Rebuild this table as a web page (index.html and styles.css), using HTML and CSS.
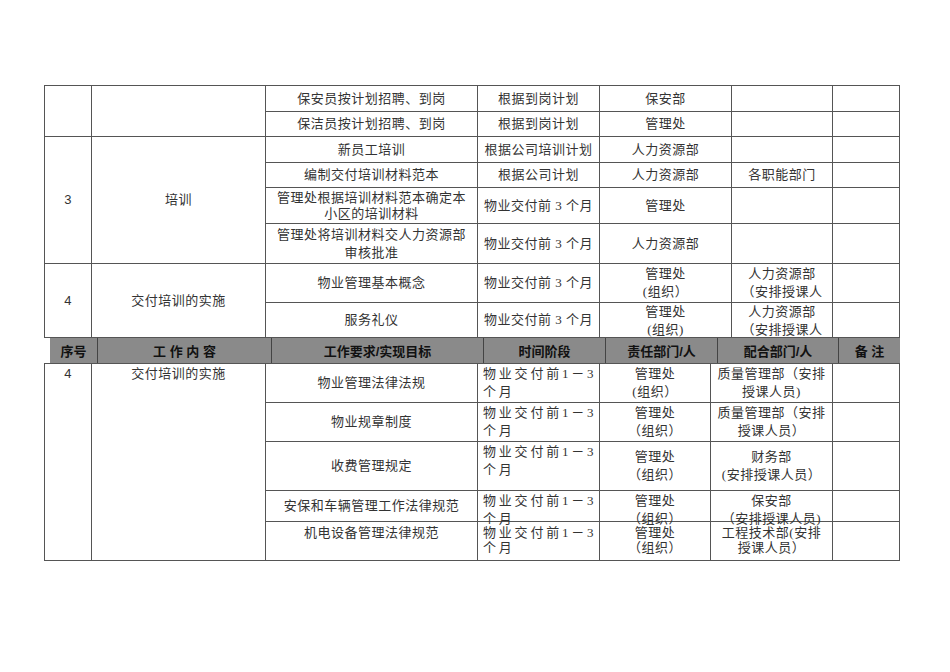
FILE: index.html
```html
<!DOCTYPE html>
<html lang="zh">
<head>
<meta charset="utf-8">
<title>交付培训计划</title>
<link rel="stylesheet" href="styles.css">
</head>
<body>
<div class="page">
  <table class="grid top">
    <colgroup>
      <col class="c1"><col class="c2"><col class="c3"><col class="c4"><col class="c5a"><col class="c6a"><col class="c7">
    </colgroup>
    <tr class="h26">
      <td rowspan="2"></td>
      <td rowspan="2"></td>
      <td>保安员按计划招聘、到岗</td>
      <td>根据到岗计划</td>
      <td>保安部</td>
      <td></td>
      <td></td>
    </tr>
    <tr class="h25">
      <td>保洁员按计划招聘、到岗</td>
      <td>根据到岗计划</td>
      <td>管理处</td>
      <td></td>
      <td></td>
    </tr>
    <tr class="h26">
      <td rowspan="4" class="num">3</td>
      <td rowspan="4">培训</td>
      <td>新员工培训</td>
      <td>根据公司培训计划</td>
      <td>人力资源部</td>
      <td></td>
      <td></td>
    </tr>
    <tr class="h25">
      <td>编制交付培训材料范本</td>
      <td>根据公司计划</td>
      <td>人力资源部</td>
      <td>各职能部门</td>
      <td></td>
    </tr>
    <tr class="h36">
      <td class="tight">管理处根据培训材料范本确定本<br>小区的培训材料</td>
      <td>物业交付前 3 个月</td>
      <td>管理处</td>
      <td></td>
      <td></td>
    </tr>
    <tr class="h40">
      <td>管理处将培训材料交人力资源部<br>审核批准</td>
      <td>物业交付前 3 个月</td>
      <td>人力资源部</td>
      <td></td>
      <td></td>
    </tr>
    <tr class="h39">
      <td rowspan="2" class="num">4</td>
      <td rowspan="2">交付培训的实施</td>
      <td>物业管理基本概念</td>
      <td>物业交付前 3 个月</td>
      <td>管理处<br>(组织）</td>
      <td>人力资源部<br>（安排授课人</td>
      <td></td>
    </tr>
    <tr class="h35">
      <td>服务礼仪</td>
      <td>物业交付前 3 个月</td>
      <td class="spill"><div class="fix34">管理处<br>(组织)</div></td>
      <td class="spill"><div class="fix34">人力资源部<br>（安排授课人</div></td>
      <td></td>
    </tr>
  </table>

  <div class="head">
    <div class="hc">序号</div>
    <div class="hc">工 作 内 容</div>
    <div class="hc">工作要求/实现目标</div>
    <div class="hc">时间阶段</div>
    <div class="hc">责任部门/人</div>
    <div class="hc">配合部门/人</div>
    <div class="hc">备 注</div>
  </div>

  <table class="grid bottom">
    <colgroup>
      <col class="c1"><col class="c2"><col class="c3"><col class="c4"><col class="c5b"><col class="c6b"><col class="c7">
    </colgroup>
    <tr class="h39">
      <td rowspan="5" class="num vtop">4</td>
      <td rowspan="5" class="vtop">交付培训的实施</td>
      <td>物业管理法律法规</td>
      <td class="time">物业交付前1－3<br>个月</td>
      <td>管理处<br>(组织）</td>
      <td>质量管理部（安排<br>授课人员)</td>
      <td></td>
    </tr>
    <tr class="h39">
      <td>物业规章制度</td>
      <td class="time">物业交付前1－3<br>个月</td>
      <td>管理处<br>（组织）</td>
      <td>质量管理部（安排<br>授课人员）</td>
      <td></td>
    </tr>
    <tr class="h49">
      <td>收费管理规定</td>
      <td class="time">物业交付前1－3<br>个月</td>
      <td>管理处<br>（组织）</td>
      <td>财务部<br>(安排授课人员）</td>
      <td></td>
    </tr>
    <tr class="h31">
      <td>安保和车辆管理工作法律规范</td>
      <td class="time vtop spill"><div class="fix30">物业交付前1－3<br>个月</div></td>
      <td class="vtop spill"><div class="fix30">管理处<br>（组织）</div></td>
      <td class="vtop spill"><div class="fix30">保安部<br>（安排授课人员)</div></td>
      <td></td>
    </tr>
    <tr class="h39 last">
      <td class="vtop">机电设备管理法律规范</td>
      <td class="time vtop">物业交付前1－3<br>个月</td>
      <td class="vtop">管理处<br>（组织）</td>
      <td class="vtop">工程技术部(安排<br>授课人员）</td>
      <td></td>
    </tr>
  </table>
</div>
</body>
</html>
```

FILE: styles.css
```css
html, body {
  margin: 0;
  padding: 0;
  background: #ffffff;
}

.page {
  padding: 85px 0 0 44px;
  font-family: "Liberation Serif", "Noto Sans CJK SC", serif;
  font-size: 13px;
  color: #333333;
}

.grid {
  border-collapse: collapse;
  table-layout: fixed;
  width: 856px;
}

.grid td {
  border: 1px solid #555555;
  padding: 0 2px;
  text-align: center;
  vertical-align: middle;
  line-height: 18px;
  letter-spacing: 0.5px;
  white-space: nowrap;
}

.c1 { width: 47px; }
.c2 { width: 174px; }
.c3 { width: 212px; }
.c4 { width: 122px; }
.c5a { width: 132px; }
.c6a { width: 101px; }
.c5b { width: 111px; }
.c6b { width: 122px; }
.c7 { width: 67px; }

.h25 { height: 25px; }
.h26 { height: 26px; }
.h31 { height: 31px; }
.h35 { height: 35px; }
.h36 { height: 36px; }
.h39 { height: 39px; }
.h40 { height: 40px; }
.h49 { height: 49px; }

.grid td.tight { line-height: 16px; }

.grid td.num {
  font-family: "Liberation Sans", "Noto Sans CJK SC", sans-serif;
}

.grid td.vtop {
  vertical-align: top;
  padding-top: 1px;
}

.grid td.time {
  vertical-align: top;
  text-align: left;
  padding: 1px 0 0 5px;
  letter-spacing: 2.8px;
}

.grid .last td.vtop {
  line-height: 15px;
  padding-top: 3px;
}

.grid td.spill {
  overflow: visible;
}

.fix34 {
  height: 34px;
  overflow: visible;
}

.fix30 {
  height: 29px;
  overflow: visible;
}

.head {
  display: grid;
  grid-template-columns: 47px 174px 212px 122px 112px 121px 62px;
  width: 850px;
  height: 25px;
  margin-left: 6px;
  background: #8a8a8a;
  font-family: "Liberation Sans", "Noto Sans CJK SC", sans-serif;
  font-weight: bold;
  color: #111111;
}

.hc {
  display: flex;
  align-items: center;
  justify-content: center;
  border-left: 1px solid #444444;
  font-size: 13px;
}

.hc:first-child {
  border-left: none;
}
```
